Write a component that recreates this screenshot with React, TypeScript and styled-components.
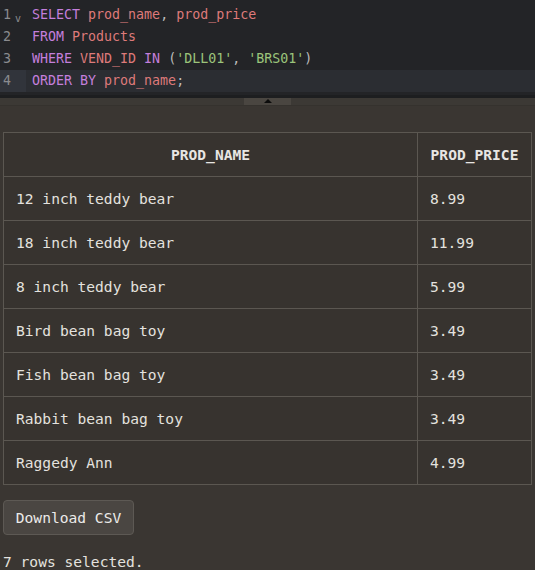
import React from "react";
import styled, { createGlobalStyle } from "styled-components";

const Global = createGlobalStyle`
  html, body { margin: 0; padding: 0; background: #3a3632; }
  body { font-family: "DejaVu Sans Mono", monospace; }
`;

const Page = styled.div`
  width: 535px;
  height: 570px;
  overflow: hidden;
  background: #3a3632;
  display: flex;
  flex-direction: column;
`;

const Editor = styled.div`
  background: #232427;
  padding: 4px 0 3px;
  font-family: "DejaVu Sans Mono", monospace;
  font-size: 13.3px;
  border-bottom: 3px solid #1d1e20;
`;

const Line = styled.div<{ $active?: boolean }>`
  display: flex;
  height: 22px;
  line-height: 22px;
  background: ${(p) => (p.$active ? "#2b2d32" : "transparent")};
`;

const Gutter = styled.div<{ $active?: boolean }>`
  width: 26px;
  flex: none;
  position: relative;
  padding-left: 3px;
  box-sizing: border-box;
  color: #8a8b8f;
  background: ${(p) => (p.$active ? "#31343b" : "transparent")};
`;

const Fold = styled.span`
  position: absolute;
  left: 15px;
  top: 4px;
  font-size: 10px;
  color: #8a8b8f;
`;

const Code = styled.div`
  padding-left: 6px;
  white-space: pre;
  color: #cfcfcf;
`;

const Kw = styled.span`
  color: #c47fdc;
`;
const Id = styled.span`
  color: #de7a7a;
`;
const Str = styled.span`
  color: #9cc47b;
`;
const Punct = styled.span`
  color: #bcbcbc;
`;

const Splitter = styled.div`
  height: 8px;
  background: #3c3935;
  border-bottom: 1px solid #35322e;
  display: flex;
  justify-content: center;
`;

const Handle = styled.div`
  width: 47px;
  height: 7px;
  background: #4a4641;
  display: flex;
  justify-content: center;
  align-items: flex-start;
  padding-top: 1px;
  box-sizing: border-box;
`;

const Triangle = styled.div`
  width: 0;
  height: 0;
  border-left: 4px solid transparent;
  border-right: 4px solid transparent;
  border-bottom: 4px solid #0c0c0c;
`;

const Results = styled.div`
  padding: 26px 4px 0 3px;
  font-family: "DejaVu Sans Mono", monospace;
  font-size: 14.6px;
  color: #e4e2df;
`;

const Table = styled.table`
  width: 529px;
  border-collapse: collapse;
  background: #37332f;
`;

const Th = styled.th<{ $w?: number }>`
  height: 44px;
  padding: 0 12px;
  border: 1px solid #5b5751;
  font-weight: bold;
  text-align: center;
  color: #e8e6e3;
  box-sizing: border-box;
  width: ${(p) => (p.$w ? `${p.$w}px` : "auto")};
`;

const Td = styled.td`
  height: 44px;
  padding: 0 12px;
  border: 1px solid #5b5751;
  text-align: left;
  color: #e4e2df;
  box-sizing: border-box;
`;

const Button = styled.button`
  margin-top: 15px;
  height: 35px;
  width: 131px;
  background: #4a4642;
  border: 1px solid #5d5954;
  border-radius: 4px;
  color: #ecebe9;
  font-family: "DejaVu Sans Mono", monospace;
  font-size: 14.6px;
  padding: 0;
  cursor: pointer;
`;

const Status = styled.div`
  margin-top: 18px;
  color: #e4e2df;
  line-height: 18px;
`;

const rows: [string, string][] = [
  ["12 inch teddy bear", "8.99"],
  ["18 inch teddy bear", "11.99"],
  ["8 inch teddy bear", "5.99"],
  ["Bird bean bag toy", "3.49"],
  ["Fish bean bag toy", "3.49"],
  ["Rabbit bean bag toy", "3.49"],
  ["Raggedy Ann", "4.99"],
];

export default function App() {
  return (
    <Page>
      <Global />
      <Editor>
        <Line>
          <Gutter>
            1<Fold>v</Fold>
          </Gutter>
          <Code>
            <Kw>SELECT</Kw> <Id>prod_name</Id>
            <Punct>,</Punct> <Id>prod_price</Id>
          </Code>
        </Line>
        <Line>
          <Gutter>2</Gutter>
          <Code>
            <Kw>FROM</Kw> <Id>Products</Id>
          </Code>
        </Line>
        <Line>
          <Gutter>3</Gutter>
          <Code>
            <Kw>WHERE</Kw> <Id>VEND_ID</Id> <Kw>IN</Kw> <Punct>(</Punct>
            <Str>'DLL01'</Str>
            <Punct>,</Punct> <Str>'BRS01'</Str>
            <Punct>)</Punct>
          </Code>
        </Line>
        <Line $active>
          <Gutter $active>4</Gutter>
          <Code>
            <Kw>ORDER BY</Kw> <Id>prod_name</Id>
            <Punct>;</Punct>
          </Code>
        </Line>
      </Editor>
      <Splitter>
        <Handle>
          <Triangle />
        </Handle>
      </Splitter>
      <Results>
        <Table>
          <thead>
            <tr>
              <Th>PROD_NAME</Th>
              <Th $w={114}>PROD_PRICE</Th>
            </tr>
          </thead>
          <tbody>
            {rows.map(([n, p]) => (
              <tr key={n}>
                <Td>{n}</Td>
                <Td>{p}</Td>
              </tr>
            ))}
          </tbody>
        </Table>
        <Button>Download CSV</Button>
        <Status>7 rows selected.</Status>
      </Results>
    </Page>
  );
}
